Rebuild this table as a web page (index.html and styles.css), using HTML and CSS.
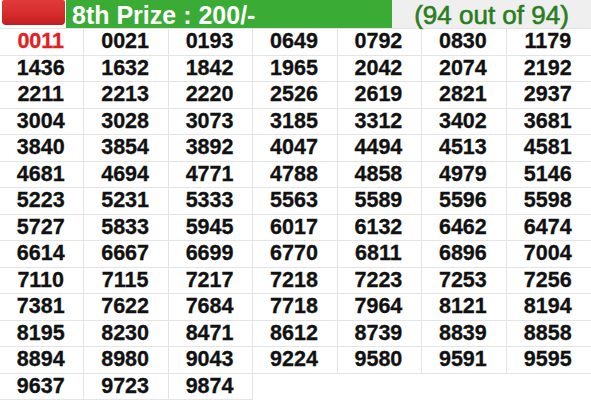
FILE: index.html
```html
<!DOCTYPE html>
<html>
<head>
<meta charset="utf-8">
<link rel="stylesheet" href="styles.css">
</head>
<body>
<div class="header">
  <div class="badge-wrap"><div class="badge"></div></div>
  <div class="title">8th Prize : 200/-</div>
  <div class="count">(94 out of 94)</div>
</div>
<div class="grid">
  <div class="cell first">0011</div><div class="cell">0021</div><div class="cell">0193</div><div class="cell">0649</div><div class="cell">0792</div><div class="cell">0830</div><div class="cell">1179</div>
  <div class="cell">1436</div><div class="cell">1632</div><div class="cell">1842</div><div class="cell">1965</div><div class="cell">2042</div><div class="cell">2074</div><div class="cell">2192</div>
  <div class="cell">2211</div><div class="cell">2213</div><div class="cell">2220</div><div class="cell">2526</div><div class="cell">2619</div><div class="cell">2821</div><div class="cell">2937</div>
  <div class="cell">3004</div><div class="cell">3028</div><div class="cell">3073</div><div class="cell">3185</div><div class="cell">3312</div><div class="cell">3402</div><div class="cell">3681</div>
  <div class="cell">3840</div><div class="cell">3854</div><div class="cell">3892</div><div class="cell">4047</div><div class="cell">4494</div><div class="cell">4513</div><div class="cell">4581</div>
  <div class="cell">4681</div><div class="cell">4694</div><div class="cell">4771</div><div class="cell">4788</div><div class="cell">4858</div><div class="cell">4979</div><div class="cell">5146</div>
  <div class="cell">5223</div><div class="cell">5231</div><div class="cell">5333</div><div class="cell">5563</div><div class="cell">5589</div><div class="cell">5596</div><div class="cell">5598</div>
  <div class="cell">5727</div><div class="cell">5833</div><div class="cell">5945</div><div class="cell">6017</div><div class="cell">6132</div><div class="cell">6462</div><div class="cell">6474</div>
  <div class="cell">6614</div><div class="cell">6667</div><div class="cell">6699</div><div class="cell">6770</div><div class="cell">6811</div><div class="cell">6896</div><div class="cell">7004</div>
  <div class="cell">7110</div><div class="cell">7115</div><div class="cell">7217</div><div class="cell">7218</div><div class="cell">7223</div><div class="cell">7253</div><div class="cell">7256</div>
  <div class="cell">7381</div><div class="cell">7622</div><div class="cell">7684</div><div class="cell">7718</div><div class="cell">7964</div><div class="cell">8121</div><div class="cell">8194</div>
  <div class="cell">8195</div><div class="cell">8230</div><div class="cell">8471</div><div class="cell">8612</div><div class="cell">8739</div><div class="cell">8839</div><div class="cell">8858</div>
  <div class="cell">8894</div><div class="cell">8980</div><div class="cell">9043</div><div class="cell">9224</div><div class="cell">9580</div><div class="cell">9591</div><div class="cell">9595</div>
  <div class="cell">9637</div><div class="cell">9723</div><div class="cell">9874</div>
</div>
</body>
</html>
```
FILE: styles.css
```css
html, body {
  margin: 0;
  padding: 0;
  background: #ffffff;
  font-family: "Liberation Sans", Arial, sans-serif;
  overflow: hidden;
}
.header {
  display: flex;
  height: 28px;
}
.badge-wrap {
  width: 66px;
  box-sizing: border-box;
  padding: 0 1px 3px 2px;
  background: #ffffff;
}
.badge {
  height: 100%;
  border-radius: 2px 2px 4px 4px;
  background: linear-gradient(180deg, #e23a3a 0%, #d42a2a 60%, #c21e1e 100%);
}
.title {
  width: 326px;
  background: #3aab34;
  color: #ffffff;
  font-weight: bold;
  font-size: 25px;
  line-height: 26px;
  padding: 2px 0 0 6px;
  box-sizing: border-box;
  white-space: nowrap;
}
.count {
  flex: 1;
  box-sizing: border-box;
  background: #efefef;
  color: #2a7d1e;
  font-size: 26px;
  line-height: 22px;
  padding-top: 4px;
  text-align: center;
  white-space: nowrap;
  -webkit-text-stroke: 0.6px #2a7d1e;
}
.grid {
  display: grid;
  grid-template-columns: repeat(7, 1fr);
  grid-auto-rows: 26.5px;
  border-top: 1px solid #e4e4e4;
}
.cell {
  display: flex;
  align-items: center;
  justify-content: center;
  font-weight: bold;
  font-size: 21.5px;
  color: #111111;
  border-right: 1px solid #e4e4e4;
  border-bottom: 1px solid #e4e4e4;
  padding-right: 2px;
  -webkit-text-stroke: 0.3px currentColor;
}
.cell:nth-child(7n) {
  border-right: none;
}
.first {
  color: #e3201f;
}
```
